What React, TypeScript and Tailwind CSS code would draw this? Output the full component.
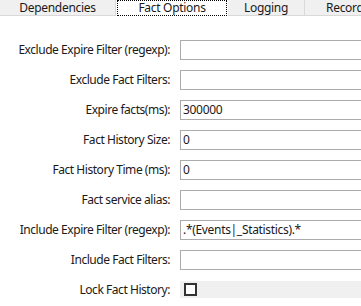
import React from 'react';

const font = { fontFamily: '"Noto Sans", "Open Sans", sans-serif' };

interface Field {
  label: string;
  value?: string;
  kind?: 'text' | 'check';
}

const fields: Field[] = [
  { label: 'Exclude Expire Filter (regexp):' },
  { label: 'Exclude Fact Filters:' },
  { label: 'Expire facts(ms):', value: '300000' },
  { label: 'Fact History Size:', value: '0' },
  { label: 'Fact History Time (ms):', value: '0' },
  { label: 'Fact service alias:' },
  { label: 'Include Expire Filter (regexp):', value: '.*(Events|_Statistics).*' },
  { label: 'Include Fact Filters:' },
  { label: 'Lock Fact History:', kind: 'check' },
];

function Tab({ label, width, selected }: { label: string; width: string; selected?: boolean }) {
  if (selected) {
    return (
      <div className={`${width} h-[17px] bg-white flex-none px-[1px]`}>
        <div className="h-[16px] border border-dotted border-black flex items-start justify-center leading-[13px] text-[12px] tracking-[-0.3px] text-[#1a1a1a]">
          {label}
        </div>
      </div>
    );
  }
  return (
    <div
      className={`${width} h-[16px] bg-[#f0f0f0] border-b border-r border-[#d9d9d9] flex-none flex items-center justify-center pt-[1px] text-[12px] tracking-[-0.3px] text-[#1a1a1a]`}
    >
      {label}
    </div>
  );
}

export default function App() {
  return (
    <div className="w-[361px] h-[306px] overflow-hidden bg-white" style={font}>
      {/* Tab strip */}
      <div className="flex items-start">
        <Tab label="Dependencies" width="w-[116px]" />
        <Tab label="Fact Options" width="w-[112px]" selected />
        <Tab label="Logging" width="w-[77px]" />
        <div className="w-[80px] h-[16px] bg-[#f0f0f0] border-b border-[#d9d9d9] flex-none flex items-center pl-[21px] pt-[1px] text-[12px] tracking-[-0.3px] text-[#1a1a1a]">
          Record
        </div>
      </div>

      {/* Form */}
      <div className="pt-[23px] flex flex-col gap-[10px]">
        {fields.map((f) => (
          <div key={f.label} className="flex items-center h-[20px]">
            <div className="w-[170px] flex-none text-right text-[12px] tracking-[-0.45px] text-[#1a1a1a] leading-[20px] whitespace-nowrap">
              {f.label}
            </div>
            <div className="ml-[10px] flex-none">
              {f.kind === 'check' ? (
                <div className="w-[200px] h-[17px] mt-[-1px] bg-[#f0f0f0] flex items-center pl-[4px]">
                  <div className="w-[13px] h-[13px] border-2 border-[#333333] bg-white" />
                </div>
              ) : (
                <div className="w-[200px] h-[20px] border border-[#ababab] bg-white flex items-center pl-[2px] text-[12px] tracking-[-0.32px] text-[#1a1a1a] whitespace-nowrap">
                  {f.value}
                </div>
              )}
            </div>
          </div>
        ))}
      </div>
    </div>
  );
}
